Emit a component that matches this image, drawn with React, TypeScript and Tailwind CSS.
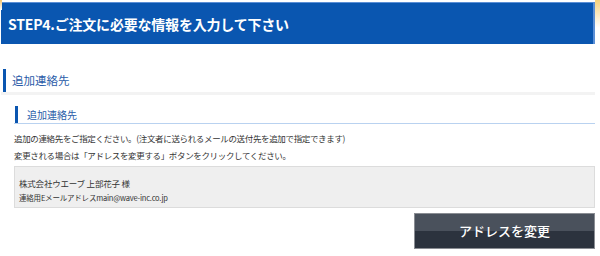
export default function App() {
  const font = "font-['Noto_Sans_CJK_JP','Liberation_Sans',sans-serif]";
  return (
    <div className={`relative w-[600px] h-[256px] bg-white overflow-hidden ${font}`}>
      {/* page edge shading */}
      <div className="absolute left-0 top-0 w-[2px] h-[10px] bg-gradient-to-b from-[#f5c46a] to-white" />
      <div className="absolute right-0 top-0 w-[5px] h-[28px] bg-gradient-to-b from-[#f7d27a] to-white" />

      <div className="pl-[1px] pr-[5px] pt-[2px]">
        <div className="h-[42px] bg-[#0a56b0] border-t border-r-2 border-[#5b8fd6] flex items-center pl-[7px]">
          <h1 className="text-white text-[14px] font-bold leading-none tracking-[-0.2px]">
            STEP4.ご注文に必要な情報を入力して下さい
          </h1>
        </div>

        <div className="mt-[25px] flex items-center h-[26px] border-b-[3px] border-[#f3f3f3]">
          <div className="w-[3px] h-full bg-[#0a56b0] ml-[2px]" />
          <h2 className="ml-[6px] text-[11.5px] text-[#2a5ca8] leading-none">追加連絡先</h2>
        </div>

        <div className="ml-[13px] mt-[11px] flex items-center h-[18px] border-b border-[#b9d2f0]">
          <div className="w-[3px] h-full bg-[#0a56b0] ml-[1px]" />
          <h3 className="ml-[9px] text-[10px] text-[#2a5ca8] leading-none">追加連絡先</h3>
        </div>

        <div className="ml-[13px] mt-[6px] h-[34px] text-[8.5px] tracking-[-0.35px] text-[#333] leading-[17px]">
          <p>追加の連絡先をご指定ください。(注文者に送られるメールの送付先を追加で指定できます)</p>
          <p>変更される場合は「アドレスを変更する」ボタンをクリックしてください。</p>
        </div>

        <div className="ml-[13px] mt-[2px] h-[42px] bg-[#efefef] border border-[#dcdcdc] pl-[4px] pt-[9px] text-[#333]">
          <p className="text-[8.5px] tracking-[-0.2px] leading-[15px]">株式会社ウエーブ 上部花子 様</p>
          <p className="text-[7.5px] tracking-[-0.2px] leading-[14px]">連絡用Eメールアドレスmain@wave-inc.co.jp</p>
        </div>

        <div className="flex justify-end mt-[5px]">
          <button className="w-[181px] h-[36px] border border-[#8a8d93] flex flex-col overflow-hidden relative">
            <div className="h-1/2 w-full bg-[#4a515c]" />
            <div className="h-1/2 w-full bg-[#2c333e]" />
            <span className="absolute inset-0 flex items-center justify-center text-white text-[13px] font-medium">
              アドレスを変更
            </span>
          </button>
        </div>
      </div>
    </div>
  );
}
